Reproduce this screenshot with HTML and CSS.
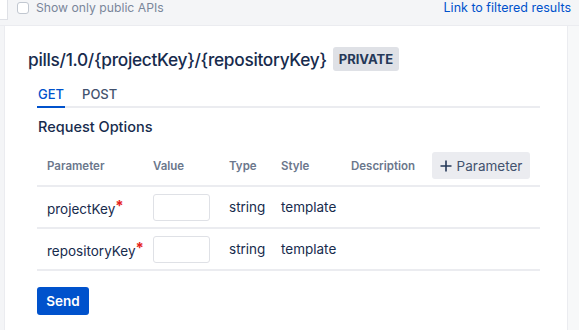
FILE: index.html
```html
<!DOCTYPE html>
<html lang="en">
<head>
    <meta charset="UTF-8">
    <meta name="viewport" content="width=device-width, initial-scale=1.0">
    <title>API Browser</title>
    <link rel="stylesheet" href="styles.css">
</head>
<body>
    <div class="top-bar">
        <div class="search-stub"></div>
        <label class="public-filter">
            <span class="checkbox"></span>
            Show only public APIs
        </label>
        <a href="#" class="filter-link">Link to filtered results</a>
    </div>

    <div class="page">
        <div class="gutter-left"></div>
        <div class="panel">
            <div class="resource-title">
                <h2>pills/1.0/{projectKey}/{repositoryKey}</h2>
                <span class="badge">PRIVATE</span>
            </div>

            <div class="resource-body">
                <div class="tabs">
                    <a href="#" class="tab active">GET</a>
                    <a href="#" class="tab">POST</a>
                </div>

                <h3>Request Options</h3>

                <table class="params">
                    <colgroup>
                        <col style="width: 106px">
                        <col style="width: 76px">
                        <col style="width: 52px">
                        <col style="width: 70px">
                        <col style="width: 81px">
                        <col>
                    </colgroup>
                    <thead>
                        <tr>
                            <th>Parameter</th>
                            <th>Value</th>
                            <th>Type</th>
                            <th>Style</th>
                            <th>Description</th>
                            <th>
                                <button class="add-param">
                                    <svg class="plus" width="12" height="12" viewBox="0 0 12 12">
                                        <path d="M6 0.5v11M0.5 6h11" stroke="#253858" stroke-width="1.6" fill="none"/>
                                    </svg>
                                    Parameter
                                </button>
                            </th>
                        </tr>
                    </thead>
                    <tbody>
                        <tr>
                            <td>projectKey<span class="req">*</span></td>
                            <td><input type="text" class="value-input"></td>
                            <td>string</td>
                            <td>template</td>
                            <td></td>
                            <td></td>
                        </tr>
                        <tr>
                            <td>repositoryKey<span class="req">*</span></td>
                            <td><input type="text" class="value-input"></td>
                            <td>string</td>
                            <td>template</td>
                            <td></td>
                            <td></td>
                        </tr>
                    </tbody>
                </table>

                <button class="send">Send</button>
            </div>
        </div>
        <div class="gutter-right"></div>
    </div>
</body>
</html>
```

FILE: styles.css
```css
body {
    font-family: Inter, "Noto Sans", sans-serif;
    margin: 0;
    color: #172b4d;
    background: #fff;
    overflow: hidden;
}
.top-bar {
    height: 25px;
    background: #f4f5f7;
    border-bottom: 1px solid #ebecf0;
    display: flex;
    align-items: flex-start;
}
.search-stub {
    width: 8px;
    height: 20px;
    background: #fff;
    border-right: 1px solid #dfe1e6;
    border-bottom: 1px solid #dfe1e6;
    box-sizing: border-box;
}
.public-filter {
    display: flex;
    align-items: center;
    gap: 7px;
    margin-left: 9px;
    height: 15px;
    font-size: 12.2px;
    color: #7a869a;
}
.checkbox {
    width: 10px;
    height: 10px;
    border: 1px solid #c1c7d0;
    border-radius: 3px;
    background: #fff;
}
.filter-link {
    margin-left: auto;
    margin-right: 8px;
    height: 15px;
    line-height: 15px;
    font-size: 12.5px;
    color: #0052cc;
    text-decoration: none;
}
.page {
    display: flex;
    height: 305px;
}
.gutter-left {
    width: 4px;
    background: #f4f5f7;
    border-right: 1px solid #ebecf0;
}
.gutter-right {
    width: 11px;
    background: #f7f8f9;
    border-left: 1px solid #ebecf0;
}
.panel {
    flex: 1;
    padding: 21px 0 0 23px;
}
.resource-title {
    display: flex;
    align-items: center;
    gap: 6px;
}
h2 {
    margin: 0;
    font-size: 17.3px;
    font-weight: 500;
    color: #172b4d;
    letter-spacing: -0.3px;
}
.badge {
    background: #dfe1e6;
    color: #253858;
    font-size: 13px;
    font-weight: 700;
    padding: 4px 6px;
    border-radius: 3px;
    line-height: 16px;
}
.resource-body {
    margin-left: 9px;
    width: 503px;
}
.tabs {
    display: flex;
    gap: 16px;
    margin-top: 13px;
    border-bottom: 2px solid #ebecf0;
}
.tab {
    font-size: 13px;
    font-weight: 500;
    color: #42526e;
    text-decoration: none;
    padding: 2px 1px 4px;
    margin-bottom: -2px;
    border-bottom: 2px solid transparent;
}
.tab.active {
    color: #0052cc;
    border-bottom-color: #0052cc;
}
h3 {
    margin: 10px 0 0 1px;
    font-size: 14.5px;
    font-weight: 500;
    color: #172b4d;
}
.params {
    width: 503px;
    border-collapse: collapse;
    margin-top: 11px;
    table-layout: fixed;
}
.params th {
    text-align: left;
    font-size: 11.5px;
    font-weight: 600;
    color: #6b778c;
    padding: 6px 10px 6px;
    border-bottom: 2px solid #ebecf0;
    height: 27px;
}
.params td {
    font-size: 13.5px;
    color: #172b4d;
    padding: 0 10px;
    height: 40px;
    border-bottom: 2px solid #ebecf0;
}
.req {
    color: #e5231b;
    font-size: 15px;
    font-weight: 700;
    vertical-align: 3px;
    line-height: 1;
}
.value-input {
    width: 57px;
    height: 27px;
    box-sizing: border-box;
    border: 1px solid #dfe1e6;
    border-radius: 3px;
    margin: 0;
    display: block;
}
.add-param {
    background: #ebecf0;
    border: none;
    border-radius: 3px;
    height: 27px;
    width: 98px;
    font-family: inherit;
    font-size: 13.5px;
    color: #42526e;
    padding: 0;
    display: flex;
    align-items: center;
    justify-content: center;
    gap: 5px;
}
.send {
    margin-top: 16px;
    background: #0052cc;
    color: #fff;
    border: none;
    border-radius: 3px;
    width: 52px;
    height: 28px;
    font-family: inherit;
    font-size: 13.5px;
    font-weight: 600;
    padding: 0;
}
```
